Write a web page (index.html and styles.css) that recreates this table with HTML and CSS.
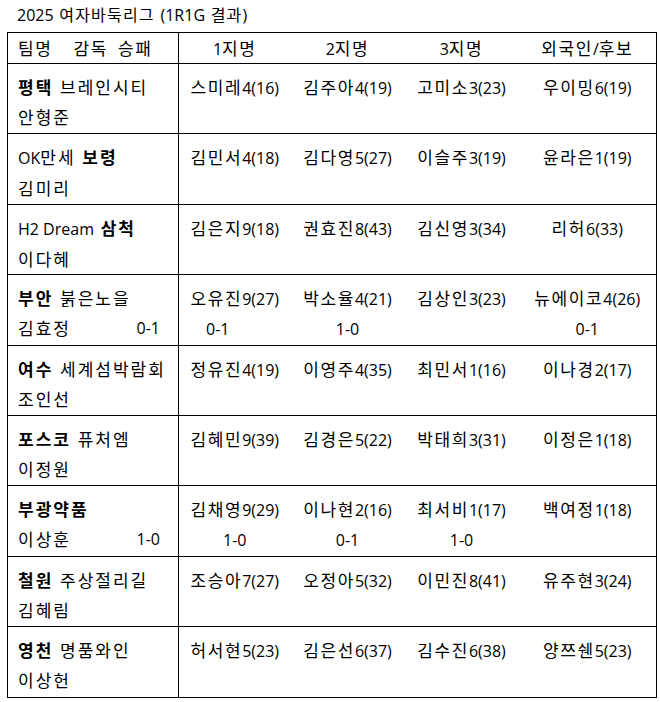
FILE: index.html
```html
<!DOCTYPE html>
<html lang="ko">
<head>
<meta charset="utf-8">
<title>2025 여자바둑리그 (1R1G 결과)</title>
<link rel="stylesheet" href="styles.css">
</head>
<body>
<h1 class="title"><span class="n">2025</span> 여자바둑리그 <span class="n">(1R1G</span> 결과<span class="n">)</span></h1>
<table class="league">
  <colgroup>
    <col class="c-team">
    <col class="c-p1">
    <col class="c-p2">
    <col class="c-p3">
    <col class="c-p4">
  </colgroup>
  <thead>
    <tr class="head">
      <th class="team"><span class="h1">팀명</span><span class="h2">감독</span><span class="h3">승패</span></th>
      <th><span class="n">1</span>지명</th>
      <th><span class="n">2</span>지명</th>
      <th><span class="n">3</span>지명</th>
      <th>외국인<span class="n">/</span>후보</th>
    </tr>
  </thead>
  <tbody>
    <tr>
      <td class="team"><div><b>평택</b> 브레인시티</div><div class="coach"><span>안형준</span></div></td>
      <td>스미레<span class="n">4(16)</span></td><td>김주아<span class="n">4(19)</span></td><td>고미소<span class="n">3(23)</span></td><td>우이밍<span class="n">6(19)</span></td>
    </tr>
    <tr>
      <td class="team"><div><span class="n">OK</span>만세 <b>보령</b></div><div class="coach"><span>김미리</span></div></td>
      <td>김민서<span class="n">4(18)</span></td><td>김다영<span class="n">5(27)</span></td><td>이슬주<span class="n">3(19)</span></td><td>윤라은<span class="n">1(19)</span></td>
    </tr>
    <tr>
      <td class="team"><div><span class="n">H2 Dream</span> <b>삼척</b></div><div class="coach"><span>이다혜</span></div></td>
      <td>김은지<span class="n">9(18)</span></td><td>권효진<span class="n">8(43)</span></td><td>김신영<span class="n">3(34)</span></td><td>리허<span class="n">6(33)</span></td>
    </tr>
    <tr>
      <td class="team"><div><b>부안</b> 붉은노을</div><div class="coach"><span>김효정</span><span class="n">0-1</span></div></td>
      <td><div>오유진<span class="n">9(27)</span></div><div class="res shift n">0-1</div></td>
      <td><div>박소율<span class="n">4(21)</span></div><div class="res n">1-0</div></td>
      <td>김상인<span class="n">3(23)</span></td>
      <td><div>뉴에이코<span class="n">4(26)</span></div><div class="res n">0-1</div></td>
    </tr>
    <tr>
      <td class="team"><div><b>여수</b> 세계섬박람회</div><div class="coach"><span>조인선</span></div></td>
      <td>정유진<span class="n">4(19)</span></td><td>이영주<span class="n">4(35)</span></td><td>최민서<span class="n">1(16)</span></td><td>이나경<span class="n">2(17)</span></td>
    </tr>
    <tr>
      <td class="team"><div><b>포스코</b> 퓨처엠</div><div class="coach"><span>이정원</span></div></td>
      <td>김혜민<span class="n">9(39)</span></td><td>김경은<span class="n">5(22)</span></td><td>박태희<span class="n">3(31)</span></td><td>이정은<span class="n">1(18)</span></td>
    </tr>
    <tr>
      <td class="team"><div><b>부광약품</b></div><div class="coach"><span>이상훈</span><span class="n">1-0</span></div></td>
      <td><div>김채영<span class="n">9(29)</span></div><div class="res n">1-0</div></td>
      <td><div>이나현<span class="n">2(16)</span></div><div class="res n">0-1</div></td>
      <td><div>최서비<span class="n">1(17)</span></div><div class="res n">1-0</div></td>
      <td>백여정<span class="n">1(18)</span></td>
    </tr>
    <tr>
      <td class="team"><div><b>철원</b> 주상절리길</div><div class="coach"><span>김혜림</span></div></td>
      <td>조승아<span class="n">7(27)</span></td><td>오정아<span class="n">5(32)</span></td><td>이민진<span class="n">8(41)</span></td><td>유주현<span class="n">3(24)</span></td>
    </tr>
    <tr>
      <td class="team"><div><b>영천</b> 명품와인</div><div class="coach"><span>이상헌</span></div></td>
      <td>허서현<span class="n">5(23)</span></td><td>김은선<span class="n">6(37)</span></td><td>김수진<span class="n">6(38)</span></td><td>양쯔쉔<span class="n">5(23)</span></td>
    </tr>
  </tbody>
</table>
</body>
</html>
```

FILE: styles.css
```css
html, body {
  background: #fff;
}
body {
  margin: 0;
  padding: 0 5px 0 7px;
  font-family: "Noto Sans CJK KR", "Noto Sans", sans-serif;
  font-size: 17px;
  letter-spacing: 1.6px;
  color: #000;
}
.n {
  font-family: "Open Sans", "Noto Sans CJK KR", sans-serif;
  font-size: 16px;
  letter-spacing: 0;
}
.title {
  margin: 0;
  padding: 2px 0 0 10px;
  height: 32px;
  box-sizing: border-box;
  font-size: 16px;
  font-weight: normal;
  line-height: 24px;
  letter-spacing: 1.2px;
}
.league {
  border-collapse: collapse;
  table-layout: fixed;
  width: 649px;
  border: 1px solid #000;
}
.c-team { width: 171px; }
.c-p1 { width: 112px; }
.c-p2 { width: 114px; }
.c-p3 { width: 114px; }
.c-p4 { width: 138px; }

.league th,
.league td {
  border-top: 1px solid #000;
  border-bottom: 1px solid #000;
  padding: 0;
  text-align: center;
  font-weight: normal;
}
.league .team {
  border-right: 1px solid #000;
  text-align: left;
  padding-left: 10px;
  letter-spacing: 2px;
}
.league .team .n {
  letter-spacing: 0;
}
.head {
  height: 31px;
}
.head th {
  vertical-align: middle;
  line-height: 24px;
}
.head th.team {
  letter-spacing: 1.6px;
}
.h2 { margin-left: 21px; }
.h3 { margin-left: 10px; }

.league tbody tr {
  height: 70.4px;
}
.league tbody td {
  vertical-align: top;
  padding-top: 8px;
  line-height: 30px;
}
.league b {
  font-weight: bold;
}
.coach {
  display: flex;
  justify-content: space-between;
  padding-right: 18px;
}
.res.shift {
  padding-right: 34px;
}
```
